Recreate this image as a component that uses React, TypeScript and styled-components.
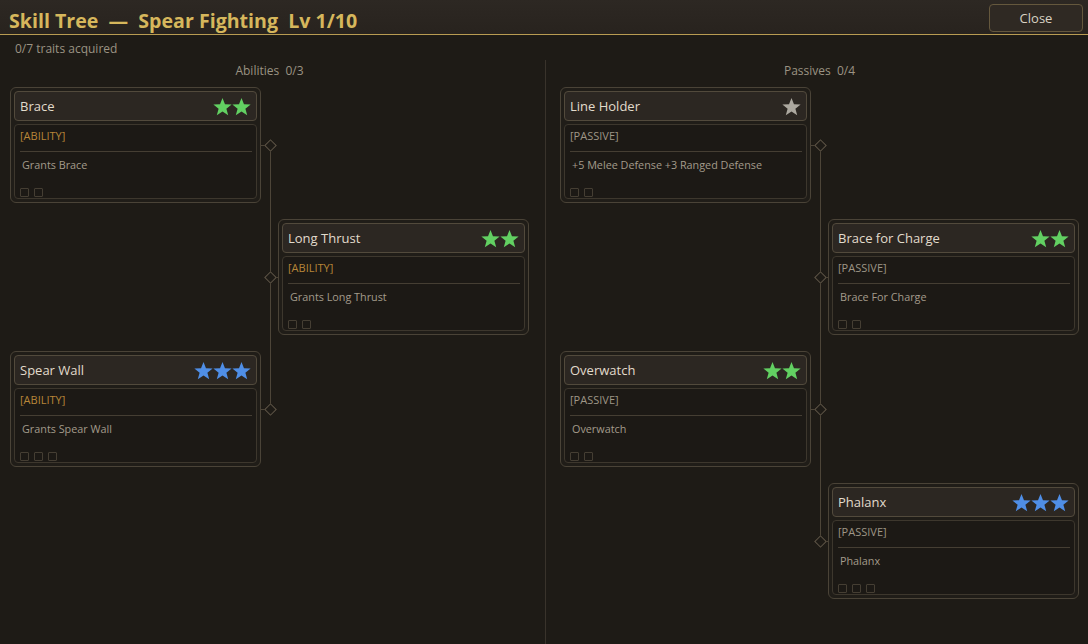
import React from "react";
import styled, { createGlobalStyle } from "styled-components";

type StarTone = "green" | "blue" | "grey";

type Trait = {
  name: string;
  kind: "ABILITY" | "PASSIVE";
  desc: string;
  stars: number;
  tone: StarTone;
  slots: number;
  tier: 1 | 2;
};

const abilities: Trait[] = [
  { name: "Brace", kind: "ABILITY", desc: "Grants Brace", stars: 2, tone: "green", slots: 2, tier: 1 },
  { name: "Long Thrust", kind: "ABILITY", desc: "Grants Long Thrust", stars: 2, tone: "green", slots: 2, tier: 2 },
  { name: "Spear Wall", kind: "ABILITY", desc: "Grants Spear Wall", stars: 3, tone: "blue", slots: 3, tier: 1 },
];

const passives: Trait[] = [
  { name: "Line Holder", kind: "PASSIVE", desc: "+5 Melee Defense +3 Ranged Defense", stars: 1, tone: "grey", slots: 2, tier: 1 },
  { name: "Brace for Charge", kind: "PASSIVE", desc: "Brace For Charge", stars: 2, tone: "green", slots: 2, tier: 2 },
  { name: "Overwatch", kind: "PASSIVE", desc: "Overwatch", stars: 2, tone: "green", slots: 2, tier: 1 },
  { name: "Phalanx", kind: "PASSIVE", desc: "Phalanx", stars: 3, tone: "blue", slots: 3, tier: 2 },
];

const toneColors: Record<StarTone, string> = {
  green: "#62d062",
  blue: "#4f8ee6",
  grey: "#aca89f",
};

const GlobalStyle = createGlobalStyle`
  html, body {
    margin: 0;
    padding: 0;
    background: #1e1b16;
  }
  body {
    font-family: "Open Sans", "Noto Sans", sans-serif;
  }
`;

const Star = ({ color }: { color: string }) => (
  <svg width="19" height="19" viewBox="0 -0.5 20 19">
    <path
      d="M10 0 L12.6 6.5 L19.6 6.8 L14.1 11.3 L16 18.2 L10 14.3 L4 18.2 L5.9 11.3 L0.4 6.8 L7.4 6.5 Z"
      fill={color}
    />
  </svg>
);

const TraitCard = ({ trait }: { trait: Trait }) => (
  <Card>
    <CardHeader>
      <CardName>{trait.name}</CardName>
      <Stars>
        {Array.from({ length: trait.stars }).map((_, i) => (
          <Star key={i} color={toneColors[trait.tone]} />
        ))}
      </Stars>
    </CardHeader>
    <CardBody>
      <KindTag $kind={trait.kind}>[{trait.kind}]</KindTag>
      <Separator />
      <Desc>{trait.desc}</Desc>
      <Slots>
        {Array.from({ length: trait.slots }).map((_, i) => (
          <Slot key={i} />
        ))}
      </Slots>
    </CardBody>
  </Card>
);

const TraitTree = ({ traits }: { traits: Trait[] }) => (
  <Tree $rows={traits.length}>
    {traits.map((t, i) => (
      <TreeCell key={t.name} $row={i + 1} $tier={t.tier}>
        <TraitCard trait={t} />
      </TreeCell>
    ))}
    <Connector $rows={traits.length}>
      {traits.map((t) => (
        <Node key={t.name} $tier={t.tier}>
          <Diamond />
        </Node>
      ))}
    </Connector>
  </Tree>
);

const App = () => (
  <>
    <GlobalStyle />
    <Window>
      <TopBar>
        <Title>Skill Tree&nbsp; —&nbsp; Spear Fighting&nbsp; Lv 1/10</Title>
        <CloseButton>Close</CloseButton>
      </TopBar>
      <Content>
        <Acquired>0/7 traits acquired</Acquired>
        <Columns>
          <Column $side="left">
            <ColumnTitle>Abilities&nbsp; 0/3</ColumnTitle>
            <TraitTree traits={abilities} />
          </Column>
          <Column $side="right">
            <ColumnTitle>Passives&nbsp; 0/4</ColumnTitle>
            <TraitTree traits={passives} />
          </Column>
        </Columns>
      </Content>
    </Window>
  </>
);

const Window = styled.div`
  width: 1088px;
  height: 644px;
  display: flex;
  flex-direction: column;
  background: #1e1b16;
  overflow: hidden;
`;

const TopBar = styled.div`
  height: 34px;
  flex-shrink: 0;
  display: flex;
  align-items: center;
  justify-content: space-between;
  padding: 0 5px 0 9px;
  background: linear-gradient(#2d2823, #28231e);
  border-bottom: 1px solid #b99c52;
`;

const Title = styled.div`
  font-size: 19.6px;
  font-weight: 700;
  color: #d6b75c;
  padding-top: 6px;
`;

const CloseButton = styled.button`
  width: 94px;
  height: 28px;
  margin-top: 2px;
  border: 1px solid #65583d;
  border-radius: 4px;
  background: #2f2923;
  color: #d9d2c3;
  font-family: "Open Sans", "Noto Sans", sans-serif;
  font-size: 13px;
  cursor: pointer;
`;

const Content = styled.div`
  flex: 1;
  display: flex;
  flex-direction: column;
  min-height: 0;
`;

const Acquired = styled.div`
  padding: 6px 0 0 15px;
  height: 19px;
  line-height: 16px;
  font-size: 12px;
  color: #9b9383;
`;

const Columns = styled.div`
  flex: 1;
  display: grid;
  grid-template-columns: 546px 1fr;
`;

const Column = styled.div<{ $side: "left" | "right" }>`
  box-sizing: border-box;
  display: flex;
  flex-direction: column;
  align-items: flex-start;
  padding: ${(p) => (p.$side === "left" ? "0 16px 0 10px" : "0 9px 0 14px")};
  border-right: ${(p) => (p.$side === "left" ? "1px solid #39332b" : "none")};
`;

const ColumnTitle = styled.div`
  width: 519px;
  height: 21px;
  line-height: 21px;
  text-align: center;
  font-size: 12px;
  color: #9b9383;
  margin-bottom: 6px;
`;

const Tree = styled.div<{ $rows: number }>`
  display: grid;
  grid-template-columns: 251px 17px 251px;
  grid-template-rows: repeat(${(p) => p.$rows}, 116px);
  row-gap: 16px;
`;

const TreeCell = styled.div<{ $row: number; $tier: number }>`
  grid-row: ${(p) => p.$row};
  grid-column: ${(p) => (p.$tier === 1 ? 1 : 3)};
`;

const Connector = styled.div<{ $rows: number }>`
  grid-column: 2;
  grid-row: 1 / ${(p) => p.$rows + 1};
  position: relative;
  display: flex;
  flex-direction: column;
  gap: 16px;

  &::before {
    content: "";
    position: absolute;
    left: 9px;
    top: 58px;
    bottom: 58px;
    width: 1px;
    background: #4d4538;
  }
`;

const Node = styled.div<{ $tier: number }>`
  height: 116px;
  position: relative;
  display: flex;
  align-items: center;
  justify-content: center;
  padding-left: 1px;

  &::after {
    content: "";
    position: absolute;
    top: 58px;
    ${(p) => (p.$tier === 1 ? "left: 0;" : "right: 0;")}
    width: 6px;
    height: 1px;
    background: #4d4538;
  }
`;

const Diamond = styled.div`
  width: 7px;
  height: 7px;
  transform: rotate(45deg);
  border: 1px solid #5e5546;
  background: #1e1b16;
  position: relative;
  z-index: 1;
`;

const Card = styled.div`
  height: 116px;
  box-sizing: border-box;
  display: flex;
  flex-direction: column;
  gap: 3px;
  padding: 3px;
  border: 1px solid #4a4337;
  border-radius: 6px;
  background: #201d18;
`;

const CardHeader = styled.div`
  height: 30px;
  flex-shrink: 0;
  box-sizing: border-box;
  display: flex;
  align-items: center;
  justify-content: space-between;
  padding: 0 5px;
  border: 1px solid #524a3c;
  border-radius: 4px;
  background: #2c2722;
`;

const CardName = styled.span`
  font-size: 13px;
  color: #e2dbcc;
`;

const Stars = styled.div`
  display: flex;
  align-items: center;
`;

const CardBody = styled.div`
  flex: 1;
  display: flex;
  flex-direction: column;
  padding: 4px 4px 1px 5px;
  border: 1px solid #3d372d;
  border-radius: 4px;
  background: #1c1915;
`;

const KindTag = styled.div<{ $kind: "ABILITY" | "PASSIVE" }>`
  font-size: 11px;
  line-height: 14px;
  color: ${(p) => (p.$kind === "ABILITY" ? "#b78638" : "#9e9686")};
`;

const Separator = styled.div`
  height: 1px;
  margin-top: 8px;
  background: #453e33;
`;

const Desc = styled.div`
  margin-top: 6px;
  padding-left: 2px;
  font-size: 10.8px;
  line-height: 14px;
  color: #a39b8b;
`;

const Slots = styled.div`
  margin-top: auto;
  display: flex;
  gap: 5px;
`;

const Slot = styled.div`
  width: 9px;
  height: 9px;
  box-sizing: border-box;
  border: 1px solid #453e33;
  border-radius: 1px;
`;

export default App;
